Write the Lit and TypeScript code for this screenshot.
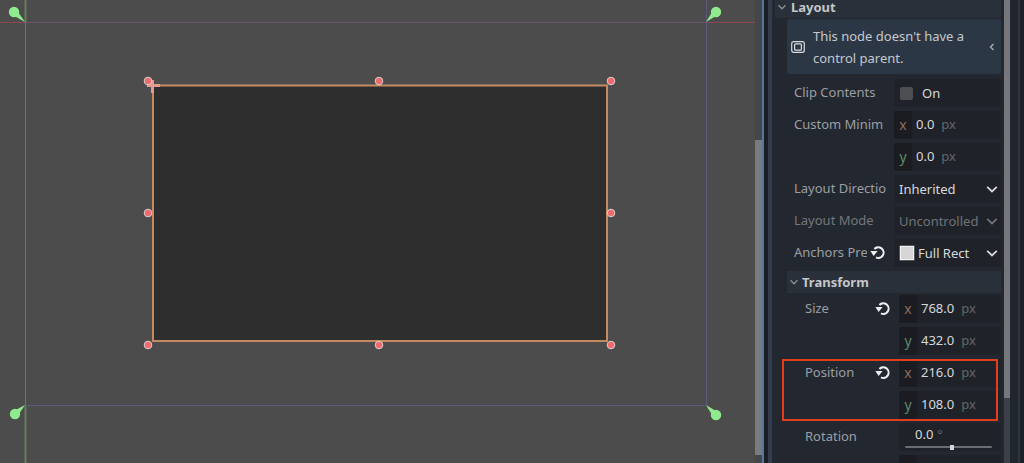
import { LitElement, html, css, svg } from "lit";
import { customElement } from "lit/decorators.js";

const HANDLES = [
  [148, 81], [379, 81], [611, 81],
  [148, 213], [611, 213],
  [148, 345], [379, 345], [611, 345],
];

// tip of the anchor pin, then the centre of its round head
const PINS = [
  [25, 22, 14, 12],
  [706, 22, 716, 12],
  [25, 405, 15, 414],
  [706, 405, 716, 415],
];

function pin(tx: number, ty: number, cx: number, cy: number) {
  const a = Math.atan2(cy - ty, cx - tx);
  const r = 5.2;
  const w = 3.4; // tail is narrower than the head
  const x1 = cx + Math.cos(a + Math.PI / 2) * w;
  const y1 = cy + Math.sin(a + Math.PI / 2) * w;
  const x2 = cx + Math.cos(a - Math.PI / 2) * w;
  const y2 = cy + Math.sin(a - Math.PI / 2) * w;
  return svg`<path d="M${tx} ${ty}L${x1} ${y1}L${x2} ${y2}Z" fill="#90ea8e"/><circle cx=${cx} cy=${cy} r=${r} fill="#90ea8e"/>`;
}

const chevron = html`<svg class="chev" viewBox="0 0 12 12"><path d="M1.2 3.8L6 8.4l4.8-4.6" fill="none" stroke="currentColor" stroke-width="1.8"/></svg>`;
const smallChev = html`<svg class="hchev" viewBox="0 0 10 10"><path d="M1.5 3.2L5 6.8l3.5-3.6" fill="none" stroke="currentColor" stroke-width="1.3"/></svg>`;
const reset = html`<svg class="reset" viewBox="0 0 16 16"><path d="M6 13.4A5.3 5.3 0 1 0 4.4 5" fill="none" stroke="#eceef0" stroke-width="2"/><path d="M0.4 7H7.6L3.6 12Z" fill="#eceef0"/></svg>`;

function axis(name: string, value: string, unit = "px") {
  return html`<div class="value axis">
    <span class="tag ${name}">${name}</span>
    <span class="num">${value}</span>
    <span class="unit">${unit}</span>
  </div>`;
}

@customElement("app-root")
export class AppRoot extends LitElement {
  static styles = css`
    :host {
      display: flex;
      width: 1024px;
      height: 463px;
      overflow: hidden;
      background: #21262e;
      font-family: "Noto Sans", sans-serif;
      font-size: 13px;
      color: #d6d8db;
    }
    .viewport {
      width: 755px;
      height: 463px;
      flex: none;
      background: #4c4c4c;
    }
    .viewport svg {
      display: block;
    }
    .vbar {
      width: 7px;
      flex: none;
      background: #444649;
      padding-top: 140px;
      box-sizing: border-box;
    }
    .vbar div {
      height: 315px;
      background: #7a7b7d;
    }
    .split {
      width: 2px;
      flex: none;
      background: #55779b;
    }
    .gutter {
      width: 4px;
      flex: none;
      background: #1a1d24;
    }
    .edge {
      width: 4px;
      flex: none;
      background: #353c49;
    }
    .body {
      width: 232px;
      flex: none;
      display: flex;
      flex-direction: column;
      gap: 4px;
      overflow: hidden;
      background: #232830;
    }
    .head {
      display: flex;
      align-items: center;
      flex: none;
      gap: 3px;
      height: 22px;
      margin: 0 3px -2px 15px;
      padding-left: 2px;
      background: #2a303a;
      font-weight: 700;
      color: #c4c6c9;
    }
    .head.top {
      gap: 4px;
      margin: -4px 3px -3px 3px;
    }
    .hchev {
      width: 10px;
      height: 10px;
      color: #8b8e93;
    }
    .info {
      display: flex;
      align-items: center;
      flex: none;
      height: 55px;
      margin: 0 3px 1px 15px;
      padding-left: 4px;
      gap: 8px;
      background: #2c3745;
      border-radius: 2px;
      line-height: 22px;
      color: #c5c8cc;
    }
    .info p {
      margin: 0;
      flex: 1;
    }
    .info .back {
      width: 10px;
      height: 10px;
      margin-right: 4px;
      color: #a8abb0;
    }
    .row {
      display: grid;
      grid-template-columns: 100px 107px;
      flex: none;
      height: 28px;
      padding-left: 22px;
    }
    .row.sub {
      grid-template-columns: 94px 102px;
      padding-left: 33px;
    }
    .label {
      display: flex;
      align-items: center;
      min-width: 0;
      padding: 0 8px 2px 0;
      color: #9b9ea3;
      white-space: nowrap;
      overflow: hidden;
    }
    .sub .label {
      padding-right: 7px;
    }
    .label.off {
      color: #73767b;
    }
    .label span {
      flex: 1;
      min-width: 0;
      overflow: hidden;
    }
    .reset {
      width: 16px;
      height: 16px;
      flex: none;
      margin-left: 3px;
    }
    .sub .reset {
      margin-right: 1px;
    }
    .value {
      display: flex;
      align-items: center;
      gap: 6px;
      background: #1f2329;
      border-radius: 2px;
      min-width: 0;
      white-space: nowrap;
      overflow: hidden;
    }
    .tag {
      align-self: stretch;
      display: flex;
      align-items: center;
      justify-content: center;
      width: 18px;
      flex: none;
      box-sizing: border-box;
      padding-bottom: 2px;
      background: #1a1c21;
      border-radius: 2px;
      font-size: 14px;
      margin-right: -2px;
    }
    .tag.x {
      color: #8f6b5c;
    }
    .tag.y {
      color: #5f8a6a;
    }
    .num {
      margin: 0 1px 2px 0;
    }
    .unit {
      margin-bottom: 2px;
      color: #63666b;
    }
    .pick {
      padding: 0 3px 0 5px;
    }
    .pick .text {
      flex: 1;
    }
    .pick.off {
      color: #6f7277;
    }
    .chev {
      width: 12px;
      height: 12px;
      flex: none;
      color: #d6d8db;
    }
    .pick.off .chev {
      color: #6f7277;
    }
    .check {
      width: 13px;
      height: 13px;
      margin: 0 3px 0 1px;
      border-radius: 2px;
      flex: none;
      background: #4c4e52;
    }
    .swatch {
      width: 12px;
      height: 12px;
      flex: none;
      background: #d6d6d6;
      border: 1px solid #f2f2f2;
      box-shadow: 0 0 0 0.5px #8a8a8a;
      margin: 0 -2px 0 1px;
    }
    .marked {
      position: relative;
      display: flex;
      flex-direction: column;
      flex: none;
      gap: 4px;
    }
    .marked::after {
      content: "";
      position: absolute;
      top: 0;
      bottom: -2px;
      left: 10px;
      right: 6px;
      border: 2px solid #e23d1c;
    }
    .spin {
      flex-direction: column;
      align-items: stretch;
      gap: 0;
      padding: 0 9px 0 6px;
    }
    .spin .top {
      display: flex;
      gap: 4px;
      height: 19px;
      align-items: center;
      margin: 1px 0 3px;
      padding-left: 10px;
    }
    .spin .top .unit {
      margin: 0;
    }
    .track {
      position: relative;
      height: 2px;
      flex: none;
      background: #6a6d72;
      border-radius: 1px;
    }
    .track i {
      position: absolute;
      left: 45px;
      top: -1.5px;
      width: 4px;
      height: 5px;
      background: #d6d8db;
    }
    .sbar {
      width: 6px;
      flex: none;
      background: #3a3f48;
    }
    .sbar div {
      height: 398px;
      background: #75777b;
    }
    .rest {
      flex: 1;
      background: linear-gradient(
        to right,
        #21262e 0,
        #21262e 8px,
        #2f3540 8px,
        #2f3540 10px,
        #1b1f26 10px
      );
    }
  `;

  render() {
    return html`
      <div class="viewport">
        <svg width="755" height="463" viewBox="0 0 755 463">
          <path d="M0 22.5H25" stroke="#8e4650" />
          <path d="M706 22.5H755" stroke="#8e4650" />
          <path d="M25 22.5H706" stroke="#6c5470" />
          <path d="M25.5 22V405" stroke="#667a5c" />
          <path d="M25.5 0V22M25.5 405V463" stroke="#667a5c" stroke-width="2" />
          <path d="M706.5 0V405" stroke="#5b5a78" />
          <path d="M25 405.5H706" stroke="#5b5a78" />
          <rect x="153" y="85.5" width="454" height="255.5" fill="#2e2e2e" stroke="#c68a62" stroke-width="2" />
          <path d="M147 85.5H160M152.5 80V93" stroke="#e39a90" stroke-width="3" />
          ${PINS.map((p) => pin(p[0], p[1], p[2], p[3]))}
          ${HANDLES.map(
            (h) => svg`<circle cx=${h[0]} cy=${h[1]} r="3.8" fill="#ee6a6c" stroke="#dccfcf" stroke-width="1" />`
          )}
        </svg>
      </div>
      <div class="vbar"><div></div></div>
      <div class="split"></div>
      <div class="gutter"></div>
      <div class="edge"></div>
      <div class="body">
        <div class="head top">${smallChev}Layout</div>
        <div class="info">
          <svg width="14" height="14" viewBox="0 0 14 14">
            <rect x="0.7" y="1.7" width="12.6" height="10.6" rx="2" fill="none" stroke="#d8dade" stroke-width="1.2" />
            <rect x="3.6" y="3.8" width="6.8" height="6.4" rx="1" fill="none" stroke="#d8dade" stroke-width="1.2" />
          </svg>
          <p>This node doesn't have a<br />control parent.</p>
          <svg class="back" viewBox="0 0 10 10"><path d="M6.5 2L3.5 5l3 3" fill="none" stroke="currentColor" stroke-width="1.4" /></svg>
        </div>
        <div class="row">
          <div class="label"><span>Clip Contents</span></div>
          <div class="value pick"><i class="check"></i><span class="text">On</span></div>
        </div>
        <div class="row">
          <div class="label"><span>Custom Minim</span></div>
          ${axis("x", "0.0")}
        </div>
        <div class="row">
          <div></div>
          ${axis("y", "0.0")}
        </div>
        <div class="row">
          <div class="label"><span>Layout Directio</span></div>
          <div class="value pick"><span class="text">Inherited</span>${chevron}</div>
        </div>
        <div class="row">
          <div class="label off"><span>Layout Mode</span></div>
          <div class="value pick off"><span class="text">Uncontrolled</span>${chevron}</div>
        </div>
        <div class="row">
          <div class="label"><span>Anchors Pre</span>${reset}</div>
          <div class="value pick"><i class="swatch"></i><span class="text">Full Rect</span>${chevron}</div>
        </div>
        <div class="head">${smallChev}Transform</div>
        <div class="row sub">
          <div class="label"><span>Size</span>${reset}</div>
          ${axis("x", "768.0")}
        </div>
        <div class="row sub">
          <div></div>
          ${axis("y", "432.0")}
        </div>
        <div class="marked">
          <div class="row sub">
            <div class="label"><span>Position</span>${reset}</div>
            ${axis("x", "216.0")}
          </div>
          <div class="row sub">
            <div></div>
            ${axis("y", "108.0")}
          </div>
        </div>
        <div class="row sub">
          <div class="label"><span>Rotation</span></div>
          <div class="value spin">
            <div class="top"><span>0.0</span><span class="unit">°</span></div>
            <div class="track"><i></i></div>
          </div>
        </div>
        <div class="row sub">
          <div></div>
          <div class="value"><span class="tag"></span></div>
        </div>
      </div>
      <div class="sbar"><div></div></div>
      <div class="rest"></div>
    `;
  }
}
